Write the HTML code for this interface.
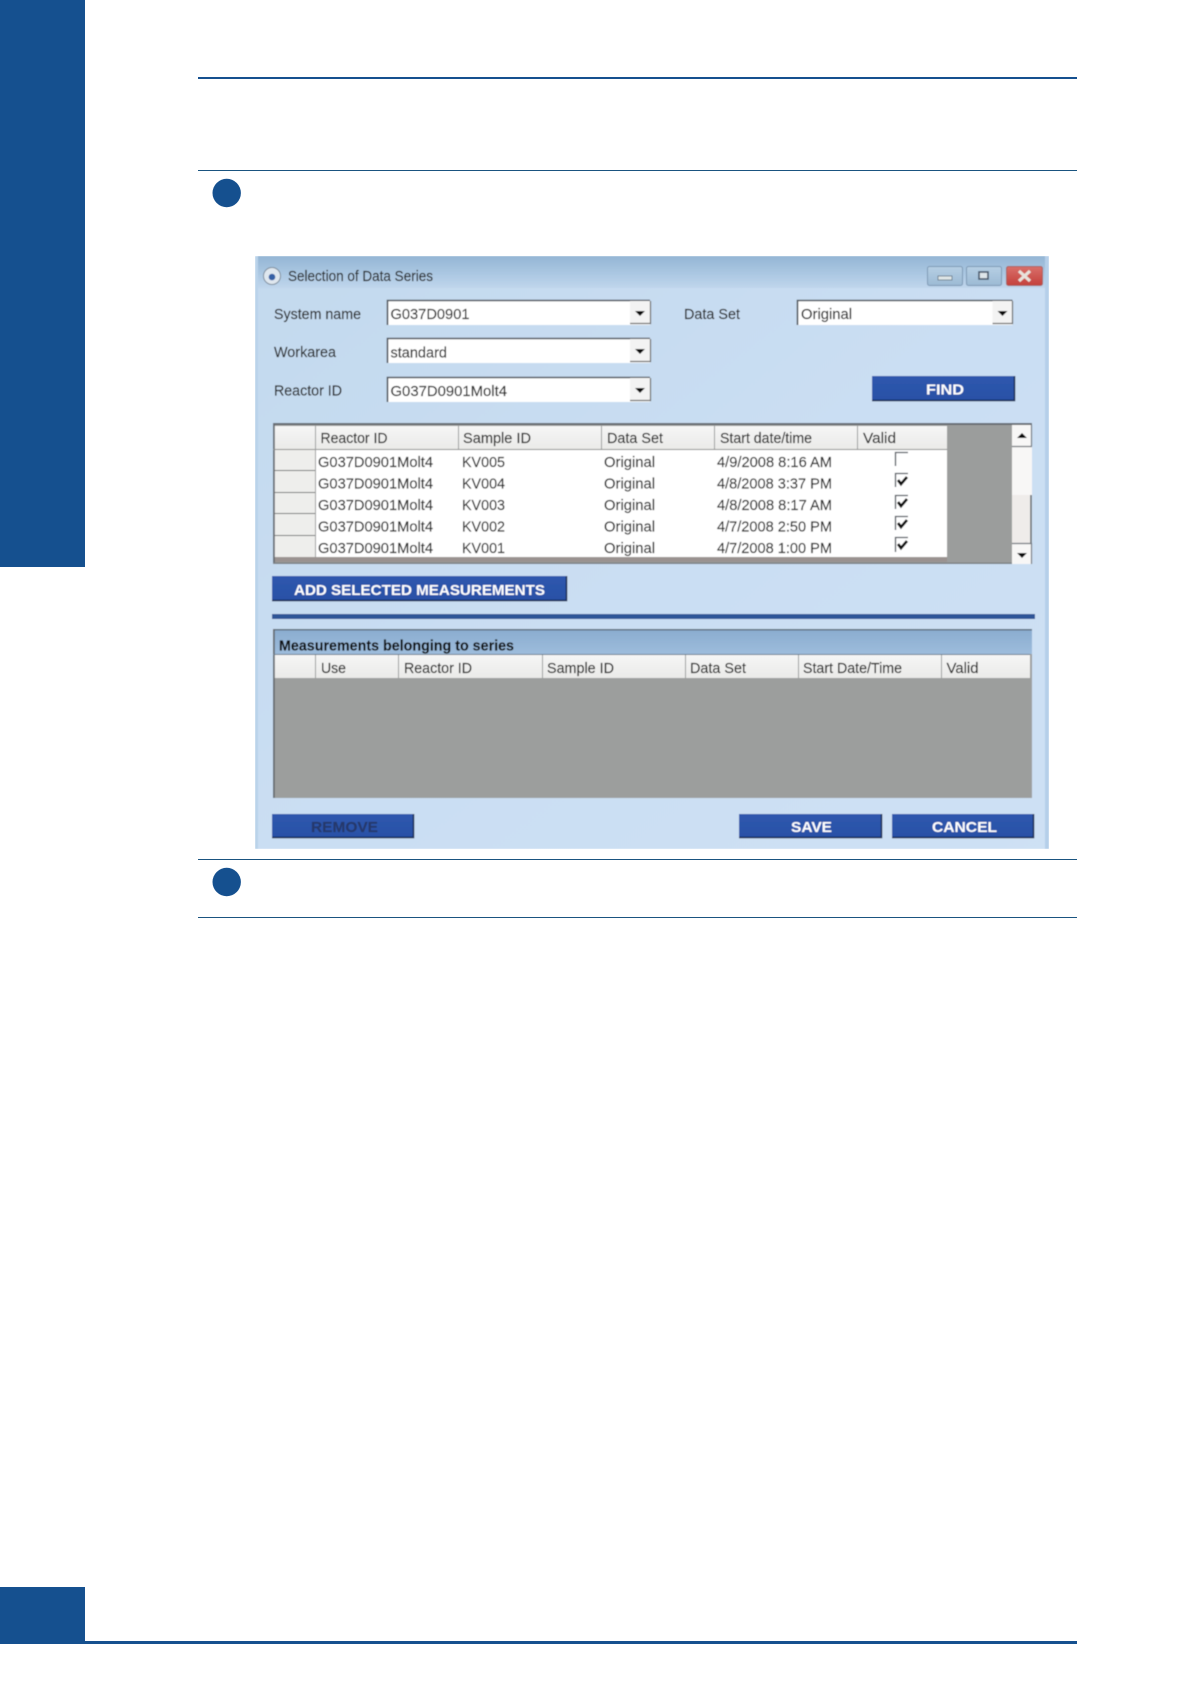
<!DOCTYPE html>
<html><head><meta charset="utf-8"><title>Selection of Data Series</title>
<style>
html,body{margin:0;padding:0;background:#fff}
svg{display:block;position:absolute;left:0;top:0}
text{font-family:"Liberation Sans",sans-serif;font-size:14.5px;fill:#262626;stroke:#262626;stroke-width:.15px}
.w{fill:#fff;stroke:none;font-weight:bold;font-size:15px}
.s{stroke:#4a5058;stroke-width:1.3;fill:none}
</style></head><body>
<svg width="1191" height="1684" viewBox="0 0 1191 1684" xmlns="http://www.w3.org/2000/svg">
<defs>
<linearGradient id="title" x1="0" y1="0" x2="0" y2="1"><stop offset="0" stop-color="#94b6d5"/><stop offset=".6" stop-color="#adc9e3"/><stop offset="1" stop-color="#c0d6ec"/></linearGradient>
<linearGradient id="body" x1="0" y1="0" x2="1" y2="1"><stop offset="0" stop-color="#c3d9ee"/><stop offset=".5" stop-color="#cadef3"/><stop offset="1" stop-color="#cee1f4"/></linearGradient>
<linearGradient id="band" x1="0" y1="0" x2="0" y2="1"><stop offset="0" stop-color="#8badd0"/><stop offset="1" stop-color="#9dbcdc"/></linearGradient>
<linearGradient id="hd" x1="0" y1="0" x2="0" y2="1"><stop offset="0" stop-color="#f6f6f6"/><stop offset="1" stop-color="#eaeae8"/></linearGradient>
<linearGradient id="ctl" x1="0" y1="0" x2="0" y2="1"><stop offset="0" stop-color="#b6cfe4"/><stop offset="1" stop-color="#9cbad4"/></linearGradient>
<linearGradient id="red" x1="0" y1="0" x2="0" y2="1"><stop offset="0" stop-color="#d9706a"/><stop offset="1" stop-color="#c4403c"/></linearGradient>
<linearGradient id="btn" x1="0" y1="0" x2="0" y2="1"><stop offset="0" stop-color="#2f58ae"/><stop offset="1" stop-color="#2850a6"/></linearGradient>
<filter id="soft" x="0" y="0" width="1" height="1"><feGaussianBlur stdDeviation="0.45"/></filter>
</defs>

<!-- page furniture -->
<rect x="0" y="0" width="85" height="567" fill="#15508f"/>
<rect x="0" y="1587" width="85" height="57" fill="#15508f"/>
<rect x="85" y="1641" width="992" height="3" fill="#15508f"/>
<rect x="198" y="77" width="879" height="2" fill="#15508f"/>
<rect x="198" y="170" width="879" height="1" fill="#1a5480"/>
<rect x="198" y="859" width="879" height="1" fill="#1a5480"/>
<rect x="198" y="917" width="879" height="1" fill="#1a5480"/>
<circle cx="226.700" cy="193" r="14.200" fill="#15508f"/>
<circle cx="226.700" cy="882" r="14.200" fill="#15508f"/>

<g filter="url(#soft)">
<!-- window -->
<rect x="255" y="256" width="794" height="593" fill="url(#body)"/>
<rect x="255" y="256" width="794" height="32" fill="url(#title)"/>
<rect x="1045" y="256" width="4" height="593" fill="#b5cfe9"/>
<rect x="255" y="256" width="3" height="593" fill="#bad3ea"/>

<circle cx="272" cy="276" r="8.500" fill="#dfe7ef" stroke="#7f8e9e" stroke-width="1"/>
<circle cx="272" cy="277" r="3.300" fill="#3560a6"/>
<text x="288" y="281" textLength="145" lengthAdjust="spacingAndGlyphs">Selection of Data Series</text>

<!-- window controls -->
<rect x="927.500" y="266.500" width="35" height="19" rx="2" fill="url(#ctl)" stroke="#7d99b5"/>
<rect x="938" y="276" width="14" height="4" fill="#dfe6e6" stroke="#5f7183" stroke-width=".8"/>
<rect x="966.500" y="266.500" width="35" height="19" rx="2" fill="url(#ctl)" stroke="#7d99b5"/>
<rect x="979" y="272" width="9" height="7" fill="#dfe6ea" stroke="#46566a" stroke-width="1.600"/>
<rect x="1006.500" y="266.500" width="36" height="19" rx="2" fill="url(#red)" stroke="#a8605f"/>
<path d="M1019 271L1030 281M1030 271L1019 281" stroke="#e8e2dc" stroke-width="3.200" fill="none"/>

<!-- labels -->
<text x="274" y="319" textLength="87" lengthAdjust="spacingAndGlyphs">System name</text>
<text x="274" y="357" textLength="62" lengthAdjust="spacingAndGlyphs">Workarea</text>
<text x="274" y="395.500" textLength="68" lengthAdjust="spacingAndGlyphs">Reactor ID</text>
<text x="684" y="319" textLength="56" lengthAdjust="spacingAndGlyphs">Data Set</text>

<!-- combos -->
<g>
<rect x="387" y="301" width="263" height="24" fill="#fff"/><path d="M387.500 325V300.500H650" stroke="#4f555c" stroke-width="1.600" fill="none"/>
<rect x="630" y="301" width="20" height="23" fill="#f3f3f3"/><path d="M630 323.500H650.500V301" stroke="#666" stroke-width="1.200" fill="none"/><path d="M635 311h10l-5 5z" fill="#111"/>
<text x="390.500" y="319" textLength="79" lengthAdjust="spacingAndGlyphs">G037D0901</text>

<rect x="387" y="339" width="263" height="24" fill="#fff"/><path d="M387.500 363V338.500H650" stroke="#4f555c" stroke-width="1.600" fill="none"/>
<rect x="630" y="339" width="20" height="23" fill="#f3f3f3"/><path d="M630 361.500H650.500V339" stroke="#666" stroke-width="1.200" fill="none"/><path d="M635 349h10l-5 5z" fill="#111"/>
<text x="390.500" y="357.500" textLength="56.500" lengthAdjust="spacingAndGlyphs">standard</text>

<rect x="387" y="378" width="263" height="24" fill="#fff"/><path d="M387.500 402V377.500H650" stroke="#4f555c" stroke-width="1.600" fill="none"/>
<rect x="630" y="378" width="20" height="23" fill="#f3f3f3"/><path d="M630 400.500H650.500V378" stroke="#666" stroke-width="1.200" fill="none"/><path d="M635 388h10l-5 5z" fill="#111"/>
<text x="390.500" y="396" textLength="116.500" lengthAdjust="spacingAndGlyphs">G037D0901Molt4</text>

<rect x="797" y="301" width="215.500" height="24" fill="#fff"/><path d="M797.500 325V300.500H1012.500" stroke="#4f555c" stroke-width="1.600" fill="none"/>
<rect x="992.500" y="301" width="20" height="23" fill="#f3f3f3"/><path d="M992.500 323.500H1012.500V301" stroke="#666" stroke-width="1.200" fill="none"/><path d="M997.500 311h10l-5 5z" fill="#111"/>
<text x="801" y="319" textLength="51" lengthAdjust="spacingAndGlyphs">Original</text>
</g>

<!-- FIND -->
<rect x="872" y="376" width="142.500" height="25" fill="url(#btn)"/><path d="M872 400.500H1014.500V376" stroke="#16264e" stroke-width="1.500" fill="none"/>
<text class="w" x="926" y="394.500" textLength="38" lengthAdjust="spacingAndGlyphs">FIND</text>

<!-- Upper grid -->
<rect x="273" y="424" width="759" height="140" fill="#9b9d9c"/>
<rect x="315" y="449" width="632" height="108" fill="#fff"/>
<rect x="273" y="449" width="42" height="108" fill="#eeeeec"/>
<rect x="273" y="426" width="674" height="23" fill="url(#hd)"/>
<rect x="273" y="557" width="674" height="5" fill="#9a9290"/>
<rect x="273" y="423" width="759" height="2" fill="#666c72"/>
<rect x="273" y="424" width="1.800" height="140" fill="#666c72"/>
<rect x="273" y="562.500" width="759" height="1.500" fill="#7d8184"/>
<path d="M273 449.500H947" stroke="#8a8c8a" stroke-width="1"/>
<path d="M315.500 426V557M458.500 426V449M601.500 426V449M714.500 426V449M857.500 426V449" stroke="#9a9c9c" stroke-width="1" fill="none"/>
<path d="M273 470.500H315M273 492.500H315M273 513.500H315M273 535.500H315" stroke="#6e7070" stroke-width="1" fill="none"/>

<text x="320.500" y="443" textLength="67" lengthAdjust="spacingAndGlyphs">Reactor ID</text>
<text x="463" y="443" textLength="68" lengthAdjust="spacingAndGlyphs">Sample ID</text>
<text x="607" y="443" textLength="56" lengthAdjust="spacingAndGlyphs">Data Set</text>
<text x="720" y="443" textLength="92" lengthAdjust="spacingAndGlyphs">Start date/time</text>
<text x="863" y="443" textLength="33" lengthAdjust="spacingAndGlyphs">Valid</text>

<text x="318" y="467" textLength="115" lengthAdjust="spacingAndGlyphs">G037D0901Molt4</text><text x="462" y="467" textLength="43" lengthAdjust="spacingAndGlyphs">KV005</text><text x="604" y="467" textLength="51" lengthAdjust="spacingAndGlyphs">Original</text><text x="717" y="467" textLength="115" lengthAdjust="spacingAndGlyphs">4/9/2008 8:16 AM</text>
<text x="318" y="488.500" textLength="115" lengthAdjust="spacingAndGlyphs">G037D0901Molt4</text><text x="462" y="488.500" textLength="43" lengthAdjust="spacingAndGlyphs">KV004</text><text x="604" y="488.500" textLength="51" lengthAdjust="spacingAndGlyphs">Original</text><text x="717" y="488.500" textLength="115" lengthAdjust="spacingAndGlyphs">4/8/2008 3:37 PM</text>
<text x="318" y="510" textLength="115" lengthAdjust="spacingAndGlyphs">G037D0901Molt4</text><text x="462" y="510" textLength="43" lengthAdjust="spacingAndGlyphs">KV003</text><text x="604" y="510" textLength="51" lengthAdjust="spacingAndGlyphs">Original</text><text x="717" y="510" textLength="115" lengthAdjust="spacingAndGlyphs">4/8/2008 8:17 AM</text>
<text x="318" y="531.500" textLength="115" lengthAdjust="spacingAndGlyphs">G037D0901Molt4</text><text x="462" y="531.500" textLength="43" lengthAdjust="spacingAndGlyphs">KV002</text><text x="604" y="531.500" textLength="51" lengthAdjust="spacingAndGlyphs">Original</text><text x="717" y="531.500" textLength="115" lengthAdjust="spacingAndGlyphs">4/7/2008 2:50 PM</text>
<text x="318" y="553" textLength="115" lengthAdjust="spacingAndGlyphs">G037D0901Molt4</text><text x="462" y="553" textLength="43" lengthAdjust="spacingAndGlyphs">KV001</text><text x="604" y="553" textLength="51" lengthAdjust="spacingAndGlyphs">Original</text><text x="717" y="553" textLength="115" lengthAdjust="spacingAndGlyphs">4/7/2008 1:00 PM</text>

<!-- checkboxes -->
<path d="M895.500 466V452.500H908" class="s"/>
<path d="M895.500 487V473.500H908" class="s"/><path d="M898 480l3 4 6-7" stroke="#111" stroke-width="2.800" fill="none"/>
<path d="M895.500 509V495.500H908" class="s"/><path d="M898 502l3 4 6-7" stroke="#111" stroke-width="2.800" fill="none"/>
<path d="M895.500 530V516.500H908" class="s"/><path d="M898 523l3 4 6-7" stroke="#111" stroke-width="2.800" fill="none"/>
<path d="M895.500 552V537.500H908" class="s"/><path d="M898 544l3 4 6-7" stroke="#111" stroke-width="2.800" fill="none"/>

<!-- scrollbar -->
<rect x="1012" y="425" width="20" height="139" fill="#f8f7f6"/>
<rect x="1012" y="495" width="18" height="48" fill="#efecea"/>
<path d="M1031 495V543" stroke="#555c63" stroke-width="1.500"/>
<path d="M1012 446.500H1032M1012 543.500H1032M1031.500 425V446M1031.500 543V564" stroke="#70767c" stroke-width="1.200" fill="none"/>
<path d="M1017 438h10l-5-5z" fill="#111"/>
<path d="M1017 553h10l-5 5z" fill="#111"/>

<!-- ADD -->
<rect x="272" y="576" width="294.500" height="25" fill="url(#btn)"/><path d="M272 600.500H566.500V576" stroke="#16264e" stroke-width="1.500" fill="none"/>
<text class="w" x="294" y="595" textLength="251" lengthAdjust="spacingAndGlyphs">ADD SELECTED MEASUREMENTS</text>

<!-- divider -->
<rect x="272" y="614" width="763" height="5" fill="#2f5597"/>

<!-- lower panel -->
<rect x="273" y="629" width="759" height="169" fill="#9c9e9d"/>
<rect x="273" y="630" width="759" height="24" fill="url(#band)"/>
<rect x="273" y="654.500" width="757" height="23.500" fill="url(#hd)"/>
<rect x="273" y="629" width="759" height="1.500" fill="#60717f"/>
<rect x="273" y="629" width="1.800" height="169" fill="#666c72"/>
<path d="M315.500 655V678M398.500 655V678M542.500 655V678M685.500 655V678M798.500 655V678M941.500 655V678" stroke="#9a9c9c" fill="none"/>
<path d="M273 654.500H1030" stroke="#6d7f8f"/>
<text x="279" y="650.500" textLength="235" lengthAdjust="spacingAndGlyphs" style="font-weight:bold;fill:#0c0c0c;stroke:#0c0c0c">Measurements belonging to series</text>
<text x="321" y="673" textLength="25" lengthAdjust="spacingAndGlyphs">Use</text>
<text x="404" y="673" textLength="68" lengthAdjust="spacingAndGlyphs">Reactor ID</text>
<text x="547" y="673" textLength="67" lengthAdjust="spacingAndGlyphs">Sample ID</text>
<text x="690" y="673" textLength="56" lengthAdjust="spacingAndGlyphs">Data Set</text>
<text x="803" y="673" textLength="99" lengthAdjust="spacingAndGlyphs">Start Date/Time</text>
<text x="946.500" y="673" textLength="32" lengthAdjust="spacingAndGlyphs">Valid</text>

<!-- bottom buttons -->
<rect x="272" y="814" width="141.500" height="24" fill="url(#btn)"/><path d="M272 837.500H413.500V814" stroke="#16264e" stroke-width="1.500" fill="none"/>
<text x="311" y="832" textLength="67" lengthAdjust="spacingAndGlyphs" style="font-weight:bold;font-size:15px;fill:#26396a;stroke:#26396a">REMOVE</text>
<rect x="739" y="814" width="142.500" height="24" fill="url(#btn)"/><path d="M739 837.500H881.500V814" stroke="#16264e" stroke-width="1.500" fill="none"/>
<text class="w" x="791" y="832" textLength="41" lengthAdjust="spacingAndGlyphs">SAVE</text>
<rect x="892" y="814" width="141.500" height="24" fill="url(#btn)"/><path d="M892 837.500H1033.500V814" stroke="#16264e" stroke-width="1.500" fill="none"/>
<text class="w" x="932" y="832" textLength="65" lengthAdjust="spacingAndGlyphs">CANCEL</text>
</g>
</svg>
</body></html>
